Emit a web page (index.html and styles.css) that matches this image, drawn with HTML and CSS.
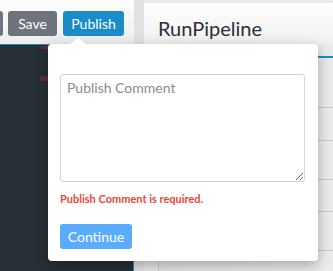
FILE: index.html
```html
<!DOCTYPE html>
<html>
<head>
<meta charset="utf-8">
<link rel="stylesheet" href="styles.css">
</head>
<body>
<div class="app">
  <div class="left">
    <div class="toolbar">
      <button class="btn btn-edge"></button>
      <button class="btn btn-save">Save</button>
      <button class="btn btn-publish">Publish</button>
    </div>
    <div class="dark">
      <span class="mark mark1"></span>
      <span class="mark mark2"></span>
    </div>
  </div>
  <div class="gutter"></div>
  <div class="main">
    <div class="header">
      <h1 class="title">RunPipeline</h1>
    </div>
    <div class="content">
      <div class="tabs"></div>
      <div class="row r1"></div>
      <div class="row r2"></div>
      <div class="row r3"></div>
      <div class="row r4"></div>
      <div class="row r5"></div>
    </div>
  </div>
</div>

<div class="popover">
  <div class="arrow"></div>
  <textarea class="comment" placeholder="Publish Comment"></textarea>
  <div class="error">Publish Comment is required.</div>
  <button class="btn btn-continue">Continue</button>
</div>
</body>
</html>
```
FILE: styles.css
```css
* { box-sizing: border-box; }
html, body { margin: 0; padding: 0; }
body {
  width: 333px;
  height: 271px;
  overflow: hidden;
  position: relative;
  font-family: "Lato", "Open Sans", sans-serif;
  background: #e8e8e8;
}
.app {
  display: flex;
  height: 271px;
}
.left {
  width: 134px;
  display: flex;
  flex-direction: column;
}
.toolbar {
  height: 44px;
  background: linear-gradient(#fdfdfd, #eeeeee);
  display: flex;
  align-items: flex-start;
  padding-top: 11px;
  gap: 5px;
  margin-left: -5px;
}
.btn {
  font-family: inherit;
  border: none;
  border-radius: 3px;
  color: #fff;
  font-size: 14px;
  height: 25px;
  padding: 0;
  cursor: pointer;
}
.btn-edge { width: 8px; background: #6c757d; }
.btn-save { width: 49px; background: #6d747b; }
.btn-publish { width: 61px; background: #1a8dc8; margin-left: 1px; }
.dark {
  flex: 1;
  background: #263035;
  border-top: 1px solid #1a8dc8;
  border-right: 1px solid #1a8dc8;
  position: relative;
}
.mark {
  position: absolute;
  background: #6e2c47;
  opacity: 0.8;
}
.mark1 { left: 41px; top: 1px; width: 7px; height: 3px; }
.mark2 { left: 40px; top: 31px; width: 8px; height: 5px; }
.gutter {
  width: 10px;
  background: #e1e1e1;
}
.main {
  flex: 1;
  display: flex;
  flex-direction: column;
  background: #e9e9e9;
}
.header {
  margin-top: 3px;
  height: 41px;
  background: linear-gradient(#ffffff, #f1f1f1);
  padding-left: 14px;
}
.title {
  margin: 0;
  font-weight: 400;
  font-size: 20px;
  line-height: 1;
  padding-top: 15px;
  color: #2a2f3a;
}
.content {
  flex: 1;
  border-left: 1px solid #cfcfcf;
  margin-left: 14px;
  background: linear-gradient(90deg, #e4e4e4, #ececec);
}
.tabs {
  height: 14px;
  border-bottom: 2px solid #1a8dc8;
}
.row { border-bottom: 1px solid #c9c9c9; }
.r1 { height: 50px; }
.r2 { height: 33px; }
.r3 { height: 39px; }
.r4 { height: 32px; }
.r5 { height: 39px; }

.popover {
  position: absolute;
  left: 48px;
  top: 44px;
  width: 270px;
  height: 217px;
  background: #fff;
  border-radius: 4px;
  box-shadow: 0 4px 14px rgba(0,0,0,0.3);
  padding: 30px 12px 0 12px;
  display: flex;
  flex-direction: column;
  align-items: flex-start;
}
.arrow {
  position: absolute;
  left: 22px;
  top: -6px;
  width: 0;
  height: 0;
  border-left: 8px solid transparent;
  border-right: 8px solid transparent;
  border-bottom: 6px solid #fff;
}
.comment {
  width: 245px;
  height: 108px;
  border: 1px solid #cfd4da;
  border-radius: 3px;
  font-family: inherit;
  font-size: 14px;
  padding: 4px 6px;
  margin: 0;
  resize: vertical;
  display: block;
}
.comment::placeholder { color: #8a8a8a; }
.error {
  margin-top: 10px;
  color: #f0443a;
  font-size: 11px;
  font-weight: 700;
}
.btn-continue {
  margin-top: 19px;
  width: 72px;
  background: #5aacff;
  font-size: 14px;
}
```
